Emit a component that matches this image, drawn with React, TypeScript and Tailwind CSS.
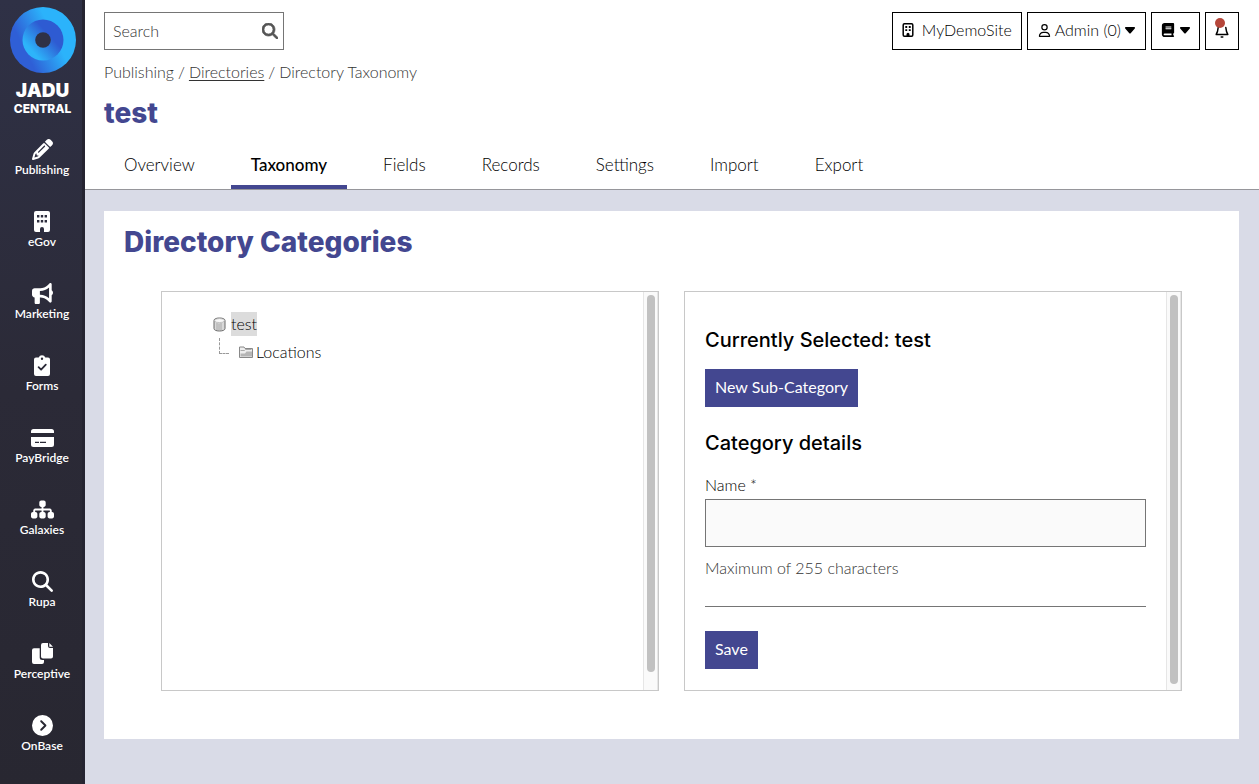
import { useState, type ReactNode } from "react";
import {
  FaBook,
  FaBullhorn,
  FaCircleChevronRight,
  FaMagnifyingGlass,
  FaPencil,
  FaRegUser,
  FaSitemap,
} from "react-icons/fa6";

function BuildingIcon() {
  return (
    <svg viewBox="0 0 16 21" className="h-[21px] w-4" fill="currentColor" fillRule="evenodd" aria-hidden="true">
      <path d="M2 0h12a2 2 0 0 1 2 2v17a2 2 0 0 1-2 2h-4v-3a2 2 0 0 0-4 0v3H2a2 2 0 0 1-2-2V2a2 2 0 0 1 2-2zM3 4v2.400h2.400V4zM6.800 4v2.400h2.400V4zM10.600 4v2.400H13V4zM3 9v2.400h2.400V9zM6.800 9v2.400h2.400V9zM10.600 9v2.400H13V9z" />
    </svg>
  );
}

function ClipboardIcon() {
  return (
    <svg viewBox="0 0 16 21" className="h-[21px] w-4" fill="currentColor" fillRule="evenodd" aria-hidden="true">
      <path d="M2 2.500h2.700a3.500 3.500 0 0 1 6.600 0H14a2 2 0 0 1 2 2V19a2 2 0 0 1-2 2H2a2 2 0 0 1-2-2V4.500a2 2 0 0 1 2-2zM8 2.600a1.200 1.200 0 1 0 0 2.400 1.200 1.200 0 0 0 0-2.400z" />
      <path d="M4.600 12.200l2.500 2.500 4.700-5" fill="none" stroke="#2b2a38" strokeWidth="1.800" strokeLinecap="round" strokeLinejoin="round" />
    </svg>
  );
}

function CardIcon() {
  return (
    <svg viewBox="0 0 23 18" className="h-[18px] w-[23px]" fill="currentColor" fillRule="evenodd" aria-hidden="true">
      <path d="M2.500 0h18A2.500 2.500 0 0 1 23 2.500V4H0V2.500A2.500 2.500 0 0 1 2.500 0zM0 8h23v7.500a2.500 2.500 0 0 1-2.500 2.500h-18A2.500 2.500 0 0 1 0 15.500zM4 12.800V14h4v-1.200zM9 12.800V14h6v-1.200z" />
    </svg>
  );
}

function CopyIcon() {
  return (
    <svg viewBox="0 0 21 21" className="h-[21px] w-[21px]" fill="currentColor" aria-hidden="true">
      <path d="M11 0h5v3a2 2 0 0 0 2 2h3v8.500a2 2 0 0 1-2 2h-8a2 2 0 0 1-2-2V2a2 2 0 0 1 2-2zM17.300 0L21 3.700h-3.700z" />
      <path d="M2 5.200h5.700v9.300A2.500 2.500 0 0 0 10.200 17H12v2a2 2 0 0 1-2 2H2a2 2 0 0 1-2-2V7.200a2 2 0 0 1 2-2z" />
    </svg>
  );
}

function CaretIcon() {
  return (
    <svg viewBox="0 0 10 7" className="h-[7px] w-2.5 shrink-0" aria-hidden="true">
      <path d="M.8 0h8.400c.8 0 1.100.9.600 1.400L5.700 6.200a1 1 0 0 1-1.400 0L.2 1.400C-.3.900 0 0 .8 0z" fill="currentColor" />
    </svg>
  );
}

function SiteIcon() {
  return (
    <svg viewBox="0 0 12 16" className="h-4 w-3" aria-hidden="true">
      <rect x="1.200" y="1.700" width="9.600" height="12.600" rx="1.200" fill="none" stroke="currentColor" strokeWidth="1.500" />
      <path d="M3.300 4h1.900v1.900H3.300zM6.800 4h1.900v1.900H6.800zM3.300 7.200h1.900v1.900H3.300zM6.800 7.200h1.900v1.900H6.800zM4.500 14.500v-2.300a1.500 1.500 0 0 1 3 0v2.300z" fill="currentColor" />
    </svg>
  );
}

function BellIcon() {
  return (
    <svg viewBox="0 0 14 18" className="h-[18px] w-3.5" fill="none" stroke="currentColor" strokeWidth="1.500" strokeLinecap="round" strokeLinejoin="round" aria-hidden="true">
      <path d="M3.200 6.500C2.900 9.500 2.500 11.500 1.200 13.500h11.600C11.500 11.500 11.100 9.500 10.800 6.500M6.200 16h1.600" />
    </svg>
  );
}

function Logo() {
  return (
    <svg viewBox="0 0 66 66" className="size-[66px]" aria-hidden="true">
      <defs>
        <linearGradient id="outer" x1="0.100" y1="0.700" x2="0.900" y2="0.300">
          <stop offset="0.150" stopColor="#2f5fd6" />
          <stop offset="0.700" stopColor="#2bb3fb" />
        </linearGradient>
        <linearGradient id="inner" x1="0.150" y1="0.800" x2="0.750" y2="0.250">
          <stop offset="0.100" stopColor="#2db4fa" />
          <stop offset="0.800" stopColor="#2e5bd2" />
        </linearGradient>
      </defs>
      <circle cx="33" cy="33" r="33" fill="url(#outer)" />
      <circle cx="33" cy="33" r="20.500" fill="url(#inner)" />
      <circle cx="33" cy="33" r="7.800" fill="#2f3146" />
    </svg>
  );
}

function DatabaseIcon() {
  return (
    <svg viewBox="0 0 13 15" className="h-[15px] w-[13px]" aria-hidden="true">
      <path d="M1 3.500C1 2 3 1 6.500 1S12 2 12 3.500v8c0 1.500-2 2.500-5.500 2.500S1 13 1 11.500z" fill="#d9d9d9" stroke="#686868" />
      <path d="M4 6v7M6 6.500v7M8 6v7" stroke="#aaa" />
      <ellipse cx="6.500" cy="3.600" rx="4.800" ry="2" fill="#f8f8f8" stroke="#aaa" strokeWidth="0.600" />
    </svg>
  );
}

function FolderIcon() {
  return (
    <svg viewBox="0 0 14 12" className="h-3 w-3.5" aria-hidden="true">
      <path d="M.5 11.500V1H5l1 1.500h7.500v9z" fill="#eee" stroke="#888" />
      <path d="M1.500 10.500V7.500H6l1.500-2H13v5z" fill="#b5b5b5" />
      <path d="M1.500 4.500h4l1-1h6" stroke="#aaa" fill="none" />
    </svg>
  );
}

const modules: { label: string; icon: ReactNode }[] = [
  { label: "Publishing", icon: <FaPencil size={21} /> },
  { label: "eGov", icon: <BuildingIcon /> },
  { label: "Marketing", icon: <FaBullhorn size={21} /> },
  { label: "Forms", icon: <ClipboardIcon /> },
  { label: "PayBridge", icon: <CardIcon /> },
  { label: "Galaxies", icon: <FaSitemap size={23} /> },
  { label: "Rupa", icon: <FaMagnifyingGlass size={21} /> },
  { label: "Perceptive", icon: <CopyIcon /> },
  { label: "OnBase", icon: <FaCircleChevronRight size={21} /> },
];

const tabs = ["Overview", "Taxonomy", "Fields", "Records", "Settings", "Import", "Export"];

function Sidebar() {
  return (
    <aside className="flex w-[85px] shrink-0 flex-col items-center border-r-[3px] border-[#252431] bg-linear-to-b from-[#2f3146] via-[#2b2a37] via-50% to-[#282731] pt-[7px] text-white">
      <a href="#home" className="flex flex-col items-center pl-[3px]">
        <Logo />
        <span className="mt-2 font-[Inter] text-[19px] leading-5 font-black">JADU</span>
        <span className="font-[Inter] text-[12px] leading-4 font-extrabold">CENTRAL</span>
      </a>
      <nav aria-label="Modules" className="mt-3.5 flex w-full flex-col pl-0.5">
        {modules.map((m) => (
          <a key={m.label} href={`#${m.label}`} className="flex h-[72px] flex-col items-center pt-2">
            <span className="flex h-[21px] items-center">{m.icon}</span>
            <span className="text-[12px] leading-5 font-semibold">{m.label}</span>
          </a>
        ))}
      </nav>
    </aside>
  );
}

function Panel({ children, thumb }: { children: ReactNode; thumb: string }) {
  return (
    <section className="flex h-[400px] min-w-0 flex-1 border border-[#c8c8c8]">
      <div className="min-w-0 flex-1">{children}</div>
      <div aria-hidden="true" className="w-[15px] shrink-0 border-x border-[#e6e6e6] bg-[#fafafa] px-[3px] pt-[3px]">
        <div className={`w-2 rounded-full bg-[#c1c1c1] ${thumb}`} />
      </div>
    </section>
  );
}

export default function App() {
  const [tab, setTab] = useState("Taxonomy");
  const toolButton = "flex h-[38px] items-center border border-black bg-white pb-0.5";
  const primary = "h-[38px] bg-[#434790] px-2.5 pb-0.5 font-normal text-white";

  return (
    <div className="flex min-h-screen bg-[#d9dbe7] font-[Lato,sans-serif] text-[16px] leading-6 font-light text-black">
      <Sidebar />
      <div className="min-w-0 flex-1">
        <header className="border-b border-[#96969b] bg-white px-5 pt-3 pl-[19px]">
          <div className="flex justify-between">
            <form role="search" className="flex h-[38px] w-[180px] items-center border border-[#757575]">
              <input type="search" aria-label="Search" placeholder="Search" className="h-full min-w-0 flex-1 px-2 pb-px outline-none placeholder:text-[#333]" />
              <button type="button" aria-label="Submit search" className="px-[5px] text-[#555]">
                <FaMagnifyingGlass size={16} className="stroke-current stroke-[24px]" />
              </button>
            </form>
            <div className="flex gap-[5px]">
              <button className={`${toolButton} gap-2 px-[9px]`}><SiteIcon />MyDemoSite</button>
              <button className={`${toolButton} gap-1 px-2.5`}><FaRegUser size={13} />Admin (0)<CaretIcon /></button>
              <button aria-label="Guides" className={`${toolButton} gap-[5px] px-[9px]`}><FaBook size={14} /><CaretIcon /></button>
              <button aria-label="Notifications" className={`${toolButton} relative px-[9px]`}>
                <BellIcon />
                <span className="absolute top-[5px] left-[9px] size-2.5 rounded-full bg-[#b5463a]" />
              </button>
            </div>
          </div>
          <nav aria-label="Breadcrumb" className="mt-2.5 flex gap-1 text-[#333]">
            <span>Publishing</span><span>/</span>
            <a href="#directories" className="underline underline-offset-2">Directories</a><span>/</span>
            <span>Directory Taxonomy</span>
          </nav>
          <h1 className="mt-[13px] font-[Inter] text-[28px] leading-8 font-extrabold text-[#434790]">test</h1>
          <div role="tablist" className="mt-3 flex gap-4 text-[17px]">
            {tabs.map((t) => (
              <button
                key={t}
                role="tab"
                aria-selected={t === tab}
                onClick={() => setTab(t)}
                className={`h-12 border-b-4 px-5 pt-[3px] ${t === tab ? "border-[#434790] font-medium" : "border-transparent"}`}
              >
                {t}
              </button>
            ))}
          </div>
        </header>
        <main className="py-[21px] pr-5 pl-[19px]">
          <div className="bg-white px-5 pt-[15px] pb-12">
            <h2 className="font-[Inter] text-[28px] leading-8 font-extrabold text-[#434790]">Directory Categories</h2>
            <div className="mt-[33px] flex gap-[25px] px-[37px]">
              <Panel thumb="h-[377px]">
                <ul className="pt-5 pl-[51px]">
                  <li>
                    <div className="flex h-6 items-center gap-[5px]">
                      <DatabaseIcon />
                      <button className="bg-[#dcdcdc] text-black">test</button>
                    </div>
                    <ul className="mt-1 pl-[6px]">
                      <li className="flex h-6 items-center">
                        <span className="mb-3 h-4 w-2.5 border-b border-l border-dashed border-[#999]" />
                        <span className="ml-2.5"><FolderIcon /></span>
                        <button className="ml-[3px]">Locations</button>
                      </li>
                    </ul>
                  </li>
                </ul>
              </Panel>
              <Panel thumb="h-[389px]">
                <form className="px-5 pt-9" onSubmit={(e) => e.preventDefault()}>
                  <h3 className="font-[Inter] text-[20px] leading-6 font-medium">Currently Selected: test</h3>
                  <button type="button" className={`${primary} mt-[17px]`}>New Sub-Category</button>
                  <h3 className="mt-6 font-[Inter] text-[20px] leading-6 font-medium">Category details</h3>
                  <label htmlFor="name" className="mt-[18px] block">Name *</label>
                  <input id="name" className="mt-0.5 block h-12 w-full border border-[#757575] bg-[#fafafa] px-2.5" />
                  <p className="mt-[9px] text-[#333]">Maximum of 255 characters</p>
                  <hr className="mt-[26px] border-[#757575]" />
                  <button type="submit" className={`${primary} mt-6`}>Save</button>
                </form>
              </Panel>
            </div>
          </div>
        </main>
      </div>
    </div>
  );
}
